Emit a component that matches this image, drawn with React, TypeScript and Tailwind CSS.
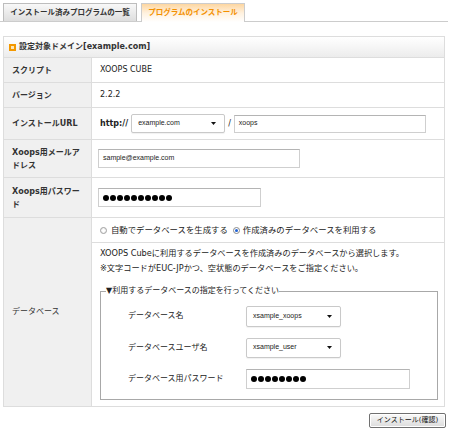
import React from "react";

const Arrow = () => (
  <svg width="5" height="3" viewBox="0 0 5 3" className="shrink-0">
    <path d="M0 0 L5 0 L2.5 3 Z" fill="#111" />
  </svg>
);

function Select({ className, text }: { className: string; text: string }) {
  return (
    <div
      className={
        "flex items-center justify-between border border-[#c9c9c9] rounded-[2px] bg-white pl-[6px] pr-[8px] text-[7px] text-[#222] font-['Liberation_Sans',Arial,sans-serif] shadow-[0_1px_1px_rgba(0,0,0,0.06)] " +
        className
      }
    >
      <span>{text}</span>
      <Arrow />
    </div>
  );
}

function TextBox({ className, children }: { className: string; children: React.ReactNode }) {
  return (
    <div
      className={
        "flex items-center border border-[#cfcfcf] border-t-[#b4b4b4] bg-white pl-[4px] text-[7px] text-[#222] font-['Liberation_Sans',Arial,sans-serif] " +
        className
      }
    >
      {children}
    </div>
  );
}

function Dots({ n }: { n: number }) {
  return (
    <div className="flex gap-[1px]">
      {Array.from({ length: n }).map((_, i) => (
        <span key={i} className="w-[6px] h-[6px] rounded-full bg-black" />
      ))}
    </div>
  );
}

function Row({
  label,
  className,
  children,
}: {
  label: React.ReactNode;
  className: string;
  children: React.ReactNode;
}) {
  return (
    <div className={"flex border-b border-[#dddddd] " + className}>
      <div className="w-[88px] shrink-0 border-r border-[#dddddd] bg-[#f0f0f0] flex items-center pl-[8px] pr-[8px] font-bold leading-[13px] text-[#333]">
        {label}
      </div>
      <div className="flex-1 flex items-center">{children}</div>
    </div>
  );
}

export default function App() {
  return (
    <div className="w-[450px] h-[435px] bg-white text-[8px] text-[#222] font-['DejaVu_Sans','Noto_Sans_CJK_JP',sans-serif]">
      {/* tabs */}
      <div className="flex items-end gap-[4px] pl-[3px] mr-[2px] h-[22px] border-b border-[#cccccc]">
        <div className="w-[134px] h-[18px] border border-b-0 border-[#bdbdbd] bg-linear-to-b from-[#f8f8f8] to-[#dedede] flex items-center justify-center font-bold text-[7.5px] text-[#333]">
          インストール済みプログラムの一覧
        </div>
        <div className="w-[104px] h-[19px] -mb-px border border-b-0 border-[#cccccc] bg-linear-to-b from-[#fdd6a0] via-[#fff1de] to-white flex items-center justify-center font-bold text-[7.5px] text-[#f39000]">
          プログラムのインストール
        </div>
      </div>

      {/* panel */}
      <div className="mt-[14px] ml-[3px] w-[442px] border border-[#dddddd]">
        <div className="h-[21px] border-b border-[#dddddd] bg-linear-to-b from-white to-[#ececec] flex items-center pl-[5px] gap-[3px] font-bold text-[#333]">
          <span className="w-[7px] h-[7px] bg-[#f39800] flex items-center justify-center">
            <span className="w-[3px] h-[3px] bg-[#fde6b8]" />
          </span>
          <span>設定対象ドメイン[example.com]</span>
        </div>

        <Row label="スクリプト" className="h-[25px]">
          <span className="pl-[8px]">XOOPS CUBE</span>
        </Row>
        <Row label="バージョン" className="h-[25px]">
          <span className="pl-[8px]">2.2.2</span>
        </Row>
        <Row label="インストールURL" className="h-[32px]">
          <div className="pl-[8px] flex items-center">
            <span className="font-bold">http://</span>
            <Select className="ml-[3px] w-[94px] h-[19px]" text="example.com" />
            <span className="mx-[3px]">/</span>
            <TextBox className="w-[192px] h-[18px]">xoops</TextBox>
          </div>
        </Row>
        <Row label="Xoops用メールアドレス" className="h-[38px]">
          <div className="pl-[6px]">
            <TextBox className="w-[202px] h-[19px]">sample@example.com</TextBox>
          </div>
        </Row>
        <Row label="Xoops用パスワード" className="h-[40px]">
          <div className="pl-[6px]">
            <TextBox className="w-[163px] h-[19px]">
              <Dots n={10} />
            </TextBox>
          </div>
        </Row>

        {/* database */}
        <div className="flex">
          <div className="w-[88px] shrink-0 border-r border-[#dddddd] bg-[#f0f0f0] flex items-center pl-[8px] text-[#333]">
            データベース
          </div>
          <div className="flex-1 pb-[6px]">
            <div className="h-[25px] border-b border-[#dddddd] flex items-center pl-[8px] text-[8.4px]">
              <span className="w-[7px] h-[7px] rounded-full border border-[#a0a0a0] bg-[#f3f3f3] flex items-center justify-center">
                <span className="w-[3px] h-[3px] rounded-full bg-white" />
              </span>
              <span className="ml-[4px]">自動でデータベースを生成する</span>
              <span className="ml-[5px] w-[7px] h-[7px] rounded-full border border-[#8a8a8a] bg-white flex items-center justify-center">
                <span className="w-[3px] h-[3px] rounded-full bg-[#1f62d6]" />
              </span>
              <span className="ml-[3px]">作成済みのデータベースを利用する</span>
            </div>
            <div className="pl-[8px] pt-[3px] leading-[15px] text-[8.2px]">
              <div>XOOPS Cubeに利用するデータベースを作成済みのデータベースから選択します。</div>
              <div>※文字コードがEUC-JPかつ、空状態のデータベースをご指定ください。</div>
            </div>
            <fieldset className="mt-[8px] ml-[8px] w-[338px] border border-[#a8a8a8]">
              <legend className="ml-[5px] leading-[14px]">▼利用するデータベースの指定を行ってください</legend>
              <div className="pl-[27px] pt-[2px] pb-[5px]">
                <div className="h-[32px] flex items-center">
                  <span className="w-[118px]">データベース名</span>
                  <Select className="w-[95px] h-[21px]" text="xsample_xoops" />
                </div>
                <div className="h-[31px] flex items-center">
                  <span className="w-[118px]">データベースユーザ名</span>
                  <Select className="w-[95px] h-[20px]" text="xsample_user" />
                </div>
                <div className="h-[31px] flex items-center">
                  <span className="w-[118px]">データベース用パスワード</span>
                  <TextBox className="w-[164px] h-[20px]">
                    <Dots n={8} />
                  </TextBox>
                </div>
              </div>
            </fieldset>
          </div>
        </div>
      </div>

      <div className="flex justify-end pr-[4px] mt-[6px]">
        <div className="w-[77px] h-[15px] border border-[#707070] rounded-[2px] bg-linear-to-b from-[#fafafa] to-[#dcdcdc] shadow-[inset_0_0_0_1px_#ffffff] flex items-center justify-center text-[7px] text-[#111]">
          インストール(確認)
        </div>
      </div>
    </div>
  );
}
